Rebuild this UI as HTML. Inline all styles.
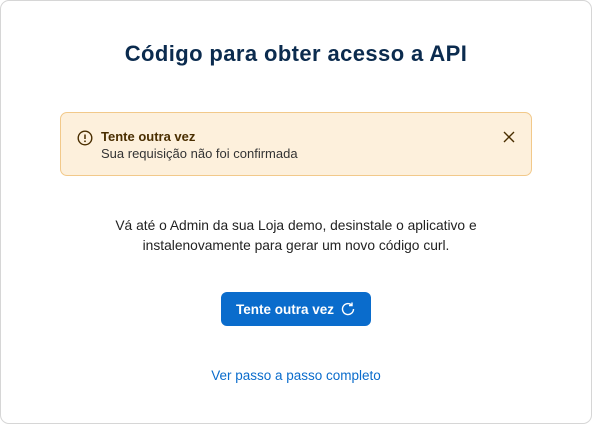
<!DOCTYPE html>
<html><head><meta charset="utf-8"><style>
*{box-sizing:border-box;margin:0;padding:0}
body{width:592px;height:424px;background:#fff;font-family:"Liberation Sans",sans-serif;position:relative;overflow:hidden}
.card{position:absolute;left:0;top:0;width:592px;height:424px;border:1px solid #d6d6d6;border-radius:9px}
h1{position:absolute;top:41px;left:0;width:592px;text-align:center;font-size:22px;font-weight:bold;color:#0b2b4e;letter-spacing:0.4px}
.alert{position:absolute;left:60px;top:112px;width:472px;height:64px;background:#fdf0dc;border:1px solid #f2c98a;border-radius:7px}
.alert .t{position:absolute;left:40px;top:16px;font-size:13px;font-weight:bold;color:#4a2e00}
.alert .s{position:absolute;left:40px;top:33px;font-size:13px;color:#333}
.alert svg.i{position:absolute;left:16px;top:17px}
.alert svg.x{position:absolute;left:442px;top:18px}
.p{position:absolute;top:216px;left:0;width:592px;text-align:center;font-size:13.8px;line-height:20px;color:#222}
.btn{position:absolute;left:221px;top:292px;width:150px;height:34px;background:#0a6ccc;border-radius:6px;color:#fff;font-size:13.5px;font-weight:bold;display:flex;align-items:center;justify-content:center;gap:6px}
.lnk{position:absolute;top:368px;left:0;width:592px;text-align:center;font-size:13.5px;color:#0a6ccc}
</style></head><body>
<div class="card"></div>
<h1>Código para obter acesso a API</h1>
<div class="alert">
<svg class="i" width="16" height="16" viewBox="0 0 16 16"><circle cx="8" cy="8" r="6.8" fill="none" stroke="#4a2e00" stroke-width="1.4"/><line x1="8" y1="4.5" x2="8" y2="9" stroke="#4a2e00" stroke-width="1.5"/><circle cx="8" cy="11.3" r="0.9" fill="#4a2e00"/></svg>
<div class="t">Tente outra vez</div>
<div class="s">Sua requisição não foi confirmada</div>
<svg class="x" width="12" height="12" viewBox="0 0 12 12"><path d="M1 1L11 11M11 1L1 11" stroke="#4a2e00" stroke-width="1.4"/></svg>
</div>
<div class="p">Vá até o Admin da sua Loja demo, desinstale o aplicativo e<br>instalenovamente para gerar um novo código curl.</div>
<div class="btn">Tente outra vez <svg width="16" height="16" viewBox="0 0 16 16"><path d="M13.5 8A5.5 5.5 0 1 1 11.5 3.8" fill="none" stroke="#fff" stroke-width="1.4"/><path d="M12 1.5V4.5H9" fill="none" stroke="#fff" stroke-width="1.4"/></svg></div>
<div class="lnk">Ver passo a passo completo</div>
</body></html>
